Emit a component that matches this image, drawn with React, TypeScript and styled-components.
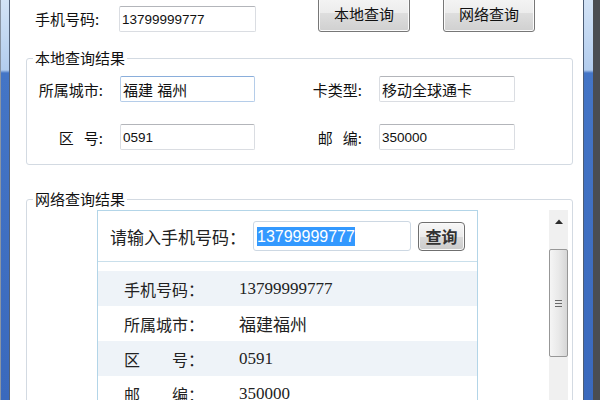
import styled, { createGlobalStyle } from "styled-components";

const GlobalStyle = createGlobalStyle`
  html, body {
    margin: 0;
    padding: 0;
  }
  body {
    width: 600px;
    height: 400px;
    overflow: hidden;
    background: #ffffff;
    font-family: "Noto Sans CJK SC", sans-serif;
    color: #111;
  }
`;

const Window = styled.div`
  display: flex;
  width: 600px;
  height: 400px;
  overflow: hidden;
`;

const FrameLeft = styled.div`
  flex: none;
  width: 10px;
  box-sizing: border-box;
  border-left: 1px solid #8a95a4;
  border-right: 1px solid #52627a;
  background: linear-gradient(
    to bottom,
    #d3e3f6 0,
    #b3cdee 70px,
    #4475c6 73px,
    #3a69bd 100%
  );
`;

const FrameRight = styled(FrameLeft)`
  width: 17px;
  border-left: 1px solid #4c5d76;
  border-right: 7px solid #4a4d52;
`;

const Client = styled.div`
  flex: 1;
  min-width: 0;
  background: #ffffff;
  overflow: hidden;
`;

// the window is cropped at the top, so the first row starts above the picture
const Content = styled.div`
  margin-top: -6px;
  display: flex;
  flex-direction: column;
`;

const TopRow = styled.div`
  display: flex;
  align-items: flex-end;
  height: 38px;
  padding-left: 25px;
`;

const Label = styled.div<{ $w?: number }>`
  width: ${({ $w }) => ($w ? `${$w}px` : "auto")};
  flex: none;
  height: 26px;
  line-height: 26px;
  font-size: 15px;
  white-space: pre;
`;

const TextBox = styled.div<{ $w: number; $focused?: boolean; $num?: boolean }>`
  box-sizing: border-box;
  width: ${({ $w }) => $w}px;
  height: 26px;
  padding: 0 2px;
  display: flex;
  align-items: center;
  background: #ffffff;
  font-family: "Liberation Sans", "Noto Sans CJK SC", sans-serif;
  font-size: ${({ $num }) => ($num ? "13.5px" : "15px")};
  color: #111;
  border: 1px solid ${({ $focused }) => ($focused ? "#b5cde9" : "#dadde2")};
  border-top-color: ${({ $focused }) => ($focused ? "#8aaedb" : "#b3b5ba")};
  border-radius: 2px;
  white-space: pre;
`;

const Button = styled.button<{ $gap: number }>`
  flex: none;
  width: 92px;
  height: 38px;
  margin-left: ${({ $gap }) => $gap}px;
  padding: 0;
  box-sizing: border-box;
  border: 1px solid #777;
  border-radius: 3px;
  background: linear-gradient(
    to bottom,
    #f6f6f6 0%,
    #ececec 50%,
    #dedede 51%,
    #d0d0d0 100%
  );
  box-shadow: inset 0 0 0 1px #fbfbfb;
  font-family: "Noto Sans CJK SC", sans-serif;
  font-size: 15px;
  color: #111;
`;

const GroupBox = styled.fieldset<{ $top: number }>`
  margin: ${({ $top }) => $top}px 10px 0 16px;
  padding: 0;
  min-width: 0;
  border: 1px solid #d3dae2;
  border-radius: 3px;
`;

const Legend = styled.legend`
  margin-left: 6px;
  padding: 0 2px;
  font-size: 15px;
  line-height: 18px;
  color: #111;
`;

const LocalGrid = styled.div`
  display: grid;
  grid-template-columns: 93px 135px 124px 136px;
  grid-auto-rows: 26px;
  row-gap: 22px;
  align-items: center;
  padding: 9px 0 14px 0;
`;

const GridLabel = styled.div`
  font-size: 15px;
  text-align: right;
  padding-right: 17px;
  white-space: pre;
`;

const Browser = styled.div`
  display: flex;
  align-items: flex-start;
  padding: 2px 4px 0 70px;
  height: 200px;
`;

const Page = styled.div`
  width: 381px;
  flex: none;
  box-sizing: border-box;
  border: 1px solid #b3d5e8;
  border-bottom: none;
  height: 200px;
  background: #ffffff;
`;

const PageHeader = styled.div`
  height: 50px;
  display: flex;
  align-items: center;
  padding-left: 12px;
  border-bottom: 1px solid #c9dfeb;
`;

const PromptText = styled.span`
  font-size: 17px;
  color: #222;
`;

const SearchBox = styled.div`
  box-sizing: border-box;
  width: 158px;
  height: 30px;
  margin-left: 7px;
  padding: 0 3px;
  display: flex;
  align-items: center;
  border: 1px solid #cdd8e3;
  border-radius: 3px;
`;

const Selected = styled.span`
  background: #3399ff;
  color: #ffffff;
  font-family: "Liberation Sans", sans-serif;
  font-size: 16px;
  line-height: 19px;
`;

const SmallButton = styled.button`
  width: 47px;
  height: 29px;
  margin-left: 7px;
  padding: 0;
  box-sizing: border-box;
  border: 1px solid #6f6f6f;
  border-radius: 4px;
  background: linear-gradient(
    to bottom,
    #f7f7f7 0%,
    #ebebeb 50%,
    #dadada 51%,
    #cbcbcb 100%
  );
  box-shadow: inset 0 0 0 1px #fafafa;
  font-family: "Noto Sans CJK SC", sans-serif;
  font-size: 16px;
  font-weight: 700;
  color: #333;
`;

const ResultTable = styled.div`
  margin-top: 9px;
`;

const ResultRow = styled.div<{ $shaded: boolean }>`
  height: 35px;
  display: flex;
  align-items: center;
  padding-left: 26px;
  background: ${({ $shaded }) => ($shaded ? "#eef3f8" : "#ffffff")};
`;

const RowLabel = styled.span`
  width: 115px;
  flex: none;
  font-size: 16px;
  color: #222;
  white-space: pre;
`;

const RowValue = styled.span`
  font-family: "Liberation Serif", "Noto Sans CJK SC", serif;
  font-size: 17px;
  color: #222;
`;

const ScrollBar = styled.div`
  margin-left: auto;
  width: 19px;
  height: 200px;
  flex: none;
  display: flex;
  flex-direction: column;
  align-items: center;
  background: #f0f0f0;
`;

const ArrowUp = styled.div`
  height: 22px;
  width: 100%;
  display: flex;
  align-items: center;
  justify-content: center;
`;

const Thumb = styled.div`
  margin-top: 17px;
  box-sizing: border-box;
  width: 19px;
  height: 108px;
  border: 1px solid #979797;
  border-radius: 2px;
  background: linear-gradient(to right, #f5f5f5 0%, #e9e9e9 50%, #d6d6d6 100%);
  display: flex;
  align-items: center;
  justify-content: center;
`;

const results = [
  { label: "手机号码：", value: "13799999777" },
  { label: "所属城市：", value: "福建福州" },
  { label: "区　　号：", value: "0591" },
  { label: "邮　　编：", value: "350000" },
];

export default function App() {
  return (
    <>
      <GlobalStyle />
      <Window>
        <FrameLeft />
        <Client>
          <Content>
            <TopRow>
              <Label $w={84}>手机号码:</Label>
              <TextBox $w={137} $num>
                13799999777
              </TextBox>
              <Button $gap={62}>本地查询</Button>
              <Button $gap={33}>网络查询</Button>
            </TopRow>

            <GroupBox $top={17}>
              <Legend>本地查询结果</Legend>
              <LocalGrid>
                <GridLabel>所属城市:</GridLabel>
                <TextBox $w={135} $focused>
                  福建 福州
                </TextBox>
                <GridLabel>卡类型:</GridLabel>
                <TextBox $w={136}>移动全球通卡</TextBox>

                <GridLabel>{"区   号:"}</GridLabel>
                <TextBox $w={135} $num>
                  0591
                </TextBox>
                <GridLabel>{"邮   编:"}</GridLabel>
                <TextBox $w={136} $num>
                  350000
                </TextBox>
              </LocalGrid>
            </GroupBox>

            <GroupBox $top={25}>
              <Legend>网络查询结果</Legend>
              <Browser>
                <Page>
                  <PageHeader>
                    <PromptText>请输入手机号码：</PromptText>
                    <SearchBox>
                      <Selected>13799999777</Selected>
                    </SearchBox>
                    <SmallButton>查询</SmallButton>
                  </PageHeader>
                  <ResultTable>
                    {results.map((r, i) => (
                      <ResultRow key={r.label} $shaded={i % 2 === 0}>
                        <RowLabel>{r.label}</RowLabel>
                        <RowValue>{r.value}</RowValue>
                      </ResultRow>
                    ))}
                  </ResultTable>
                </Page>
                <ScrollBar>
                  <ArrowUp>
                    <svg width="8" height="5" viewBox="0 0 8 5">
                      <polygon points="0,5 4,0.5 8,5" fill="#2b2b2b" />
                    </svg>
                  </ArrowUp>
                  <Thumb>
                    <svg width="7" height="7" viewBox="0 0 7 7">
                      <rect x="0" y="0" width="7" height="1" fill="#6a6a6a" />
                      <rect x="0" y="3" width="7" height="1" fill="#6a6a6a" />
                      <rect x="0" y="6" width="7" height="1" fill="#6a6a6a" />
                    </svg>
                  </Thumb>
                </ScrollBar>
              </Browser>
            </GroupBox>
          </Content>
        </Client>
        <FrameRight />
      </Window>
    </>
  );
}
